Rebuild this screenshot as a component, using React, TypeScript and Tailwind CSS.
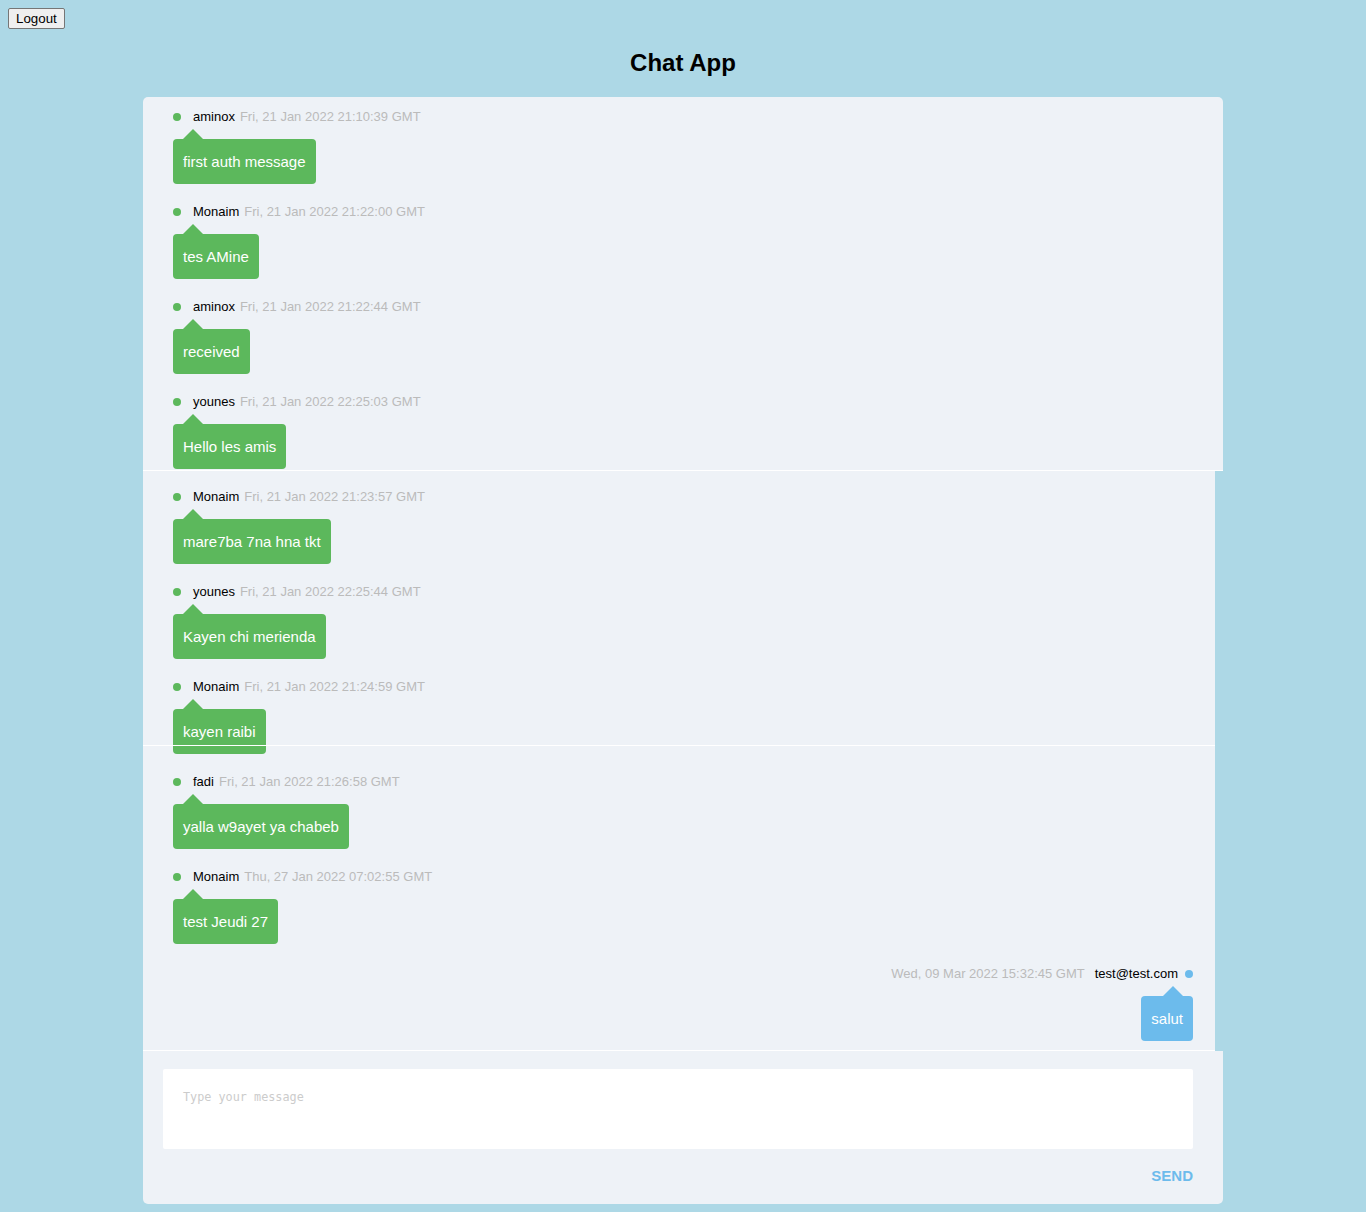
import { useState } from 'react'

interface Message {
  user: string
  date: string
  text: string
  mine?: boolean
}

const messages: Message[] = [
  { user: 'aminox', date: 'Fri, 21 Jan 2022 21:10:39 GMT', text: 'first auth message' },
  { user: 'Monaim', date: 'Fri, 21 Jan 2022 21:22:00 GMT', text: 'tes AMine' },
  { user: 'aminox', date: 'Fri, 21 Jan 2022 21:22:44 GMT', text: 'received' },
  { user: 'younes', date: 'Fri, 21 Jan 2022 22:25:03 GMT', text: 'Hello les amis' },
  { user: 'Monaim', date: 'Fri, 21 Jan 2022 21:23:57 GMT', text: 'mare7ba 7na hna tkt' },
  { user: 'younes', date: 'Fri, 21 Jan 2022 22:25:44 GMT', text: 'Kayen chi merienda' },
  { user: 'Monaim', date: 'Fri, 21 Jan 2022 21:24:59 GMT', text: 'kayen raibi' },
  { user: 'fadi', date: 'Fri, 21 Jan 2022 21:26:58 GMT', text: 'yalla w9ayet ya chabeb' },
  { user: 'Monaim', date: 'Thu, 27 Jan 2022 07:02:55 GMT', text: 'test Jeudi 27' },
  { user: 'test@test.com', date: 'Wed, 09 Mar 2022 15:32:45 GMT', text: 'salut', mine: true },
]

function Bubble({ m }: { m: Message }) {
  if (m.mine) {
    return (
      <li className="flex flex-col items-end mt-[22px]">
        <div className="flex items-center h-4 text-[13px] leading-4">
          <span className="text-[#bbbbbb] mr-[10px]">{m.date}</span>
          <span className="text-black">{m.user}</span>
          <span className="ml-[7px] w-2 h-2 rounded-full bg-[#6cbbec]" />
        </div>
        <div className="relative mt-[14px] bg-[#6cbbec] text-white text-[15px] leading-[25px] px-2.5 py-2.5 rounded-[4px]">
          <span className="absolute -top-[10px] right-[10px] w-0 h-0 border-x-[10px] border-x-transparent border-b-[10px] border-b-[#6cbbec]" />
          {m.text}
        </div>
      </li>
    )
  }
  return (
    <li className="flex flex-col items-start mt-[20px] first:mt-0">
      <div className="flex items-center h-4 text-[13px] leading-4">
        <span className="w-2 h-2 rounded-full bg-[#5cb85c] mr-3" />
        <span className="text-black">{m.user}</span>
        <span className="text-[#bbbbbb] ml-[5px]">{m.date}</span>
      </div>
      <div className="relative mt-[14px] bg-[#5cb85c] text-white text-[15px] leading-[25px] px-2.5 py-2.5 rounded-[4px]">
        <span className="absolute -top-[10px] left-[10px] w-0 h-0 border-x-[10px] border-x-transparent border-b-[10px] border-b-[#5cb85c]" />
        {m.text}
      </div>
    </li>
  )
}

export default function App() {
  const [text, setText] = useState('')

  return (
    <div className="min-h-[1212px] bg-[#add8e6] flex flex-col font-['Liberation_Sans',Arial,sans-serif]">
      <div className="flex pl-2 pt-2">
        <button className="h-[21px] px-[7px] text-[13.33px] leading-[15px] text-black bg-[#efefef] border border-[#767676] rounded-[2px]">
          Logout
        </button>
      </div>
      <h1 className="mt-[20px] text-center text-[24px] leading-[28px] font-bold text-black">Chat App</h1>
      <div className="mx-auto mt-[20px] mb-2 w-[1080px] bg-[#eef2f7] rounded-[5px]">
        <div className="relative h-[954px] overflow-hidden">
          <ul className="pt-[12px] px-[30px] flex flex-col">
            {messages.map((m, i) => (
              <Bubble key={i} m={m} />
            ))}
          </ul>
          {/* odd render seams of the scroll area */}
          <div className="absolute left-0 right-0 top-[373px] h-px bg-white" />
          <div className="absolute right-0 top-[374px] bottom-0 w-2 bg-[#add8e6]" />
          <div className="absolute left-0 right-2 top-[648px] h-px bg-white" />
          <div className="absolute left-0 right-2 bottom-0 h-px bg-white" />
        </div>
        <div className="pl-5 pr-[30px] pt-[18px] pb-[19px] flex flex-col">
          <textarea
            value={text}
            onChange={(e) => setText(e.target.value)}
            placeholder="Type your message"
            className="h-20 w-full resize-none bg-white rounded-[2px] px-5 py-[20px] font-['DejaVu_Sans_Mono',monospace] text-[11.8px] leading-4 placeholder:text-[#cccccc] outline-none"
          />
          <button className="self-end mt-[18px] text-[15px] leading-[18px] font-bold text-[#6cbbec]">SEND</button>
        </div>
      </div>
    </div>
  )
}
